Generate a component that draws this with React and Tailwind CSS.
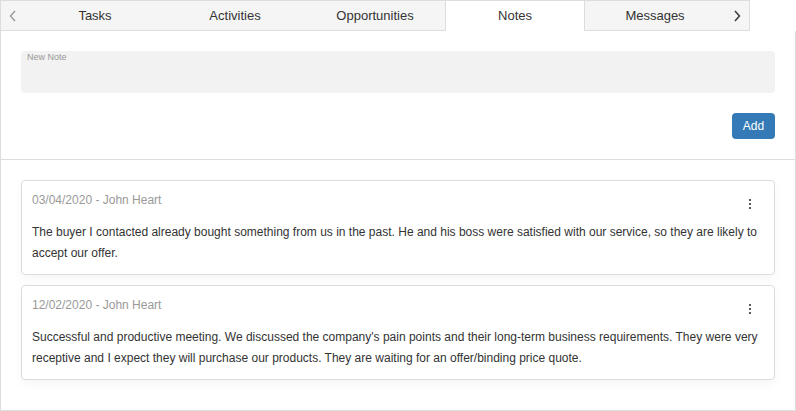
import React from "react";

const tabs = ["Tasks", "Activities", "Opportunities", "Notes", "Messages"];

const notes = [
  {
    date: "03/04/2020",
    author: "John Heart",
    text: "The buyer I contacted already bought something from us in the past. He and his boss were satisfied with our service, so they are likely to accept our offer.",
  },
  {
    date: "12/02/2020",
    author: "John Heart",
    text: "Successful and productive meeting. We discussed the company's pain points and their long-term business requirements. They were very receptive and I expect they will purchase our products. They are waiting for an offer/binding price quote.",
  },
];

const Chevron = ({ dir, color }) => (
  <svg width="8" height="12" viewBox="0 0 8 12" fill="none">
    <path
      d={dir === "left" ? "M6 1 L1.5 6 L6 11" : "M2 1 L6.5 6 L2 11"}
      stroke={color}
      strokeWidth="1.4"
    />
  </svg>
);

const Dots = () => (
  <svg width="4" height="12" viewBox="0 0 4 12">
    <circle cx="2" cy="2" r="1.1" fill="#333" />
    <circle cx="2" cy="6" r="1.1" fill="#333" />
    <circle cx="2" cy="10" r="1.1" fill="#333" />
  </svg>
);

const App = () => {
  const active = "Notes";

  return (
    <div
      className="w-[796px] h-[411px] bg-white text-[#333] flex flex-col"
      style={{ fontFamily: '"Liberation Sans", Arial, sans-serif' }}
    >
      {/* Tabs */}
      <div className="w-[750px] h-[31px] flex border border-[#ddd] bg-[#f5f5f5]">
        <div className="w-[24px] flex items-center justify-center">
          <Chevron dir="left" color="#999" />
        </div>
        {tabs.map((tab) => (
          <div
            key={tab}
            className={`w-[140px] flex items-center justify-center text-[13px] ${
              tab === active
                ? "bg-white border-x border-[#ddd] -mb-px"
                : "text-[#333]"
            }`}
          >
            {tab}
          </div>
        ))}
        <div className="flex-1 flex items-center justify-center">
          <Chevron dir="right" color="#333" />
        </div>
      </div>

      {/* Content */}
      <div className="flex-1 border-x border-b border-[#ddd] flex flex-col">
        <div className="px-5 pt-5 pb-5 flex flex-col gap-5">
          <div className="h-[42px] rounded bg-[#f2f2f2] px-1.5 pt-px">
            <div className="text-[9px] leading-[11px] text-[#999]">New Note</div>
          </div>
          <div className="flex justify-end">
            <button className="h-[26px] w-[43px] rounded bg-[#337ab7] text-white text-[12px]">
              Add
            </button>
          </div>
        </div>
        <div className="border-t border-[#ddd]" />
        <div className="px-5 pt-5 flex flex-col gap-[10px]">
          {notes.map((note) => (
            <div
              key={note.date}
              className="border border-[#ddd] rounded px-[10px] pt-[9px] pb-[10px] shadow-[0_4px_10px_rgba(0,0,0,0.04)]"
            >
              <div className="flex items-center justify-between h-[20px]">
                <span className="text-[12px] text-[#999]">
                  {note.date} - {note.author}
                </span>
                <span className="mr-[12px] mt-[8px]">
                  <Dots />
                </span>
              </div>
              <p className="mt-[12px] text-[12px] leading-[21px] text-[#333]">
                {note.text}
              </p>
            </div>
          ))}
        </div>
      </div>
    </div>
  );
};

export default App;
